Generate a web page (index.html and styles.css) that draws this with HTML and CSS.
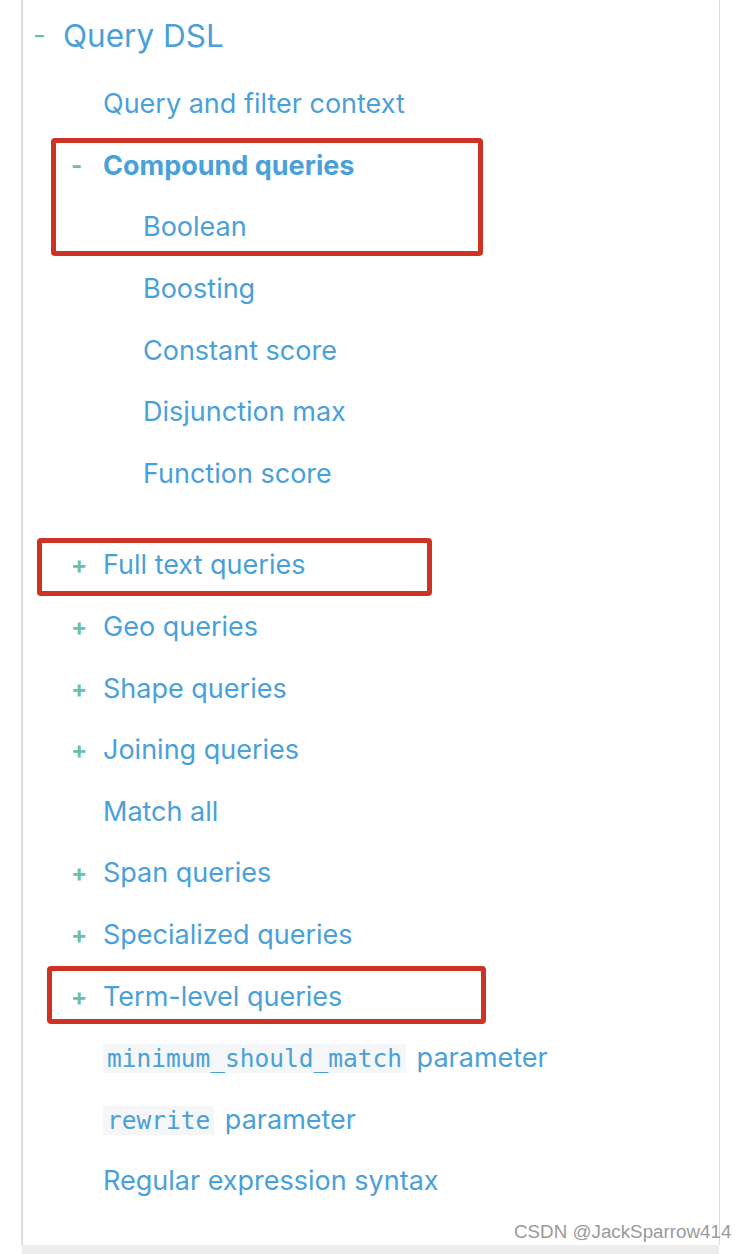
FILE: index.html
```html
<!DOCTYPE html>
<html lang="en">
<head>
<meta charset="utf-8">
<title>Query DSL</title>
<link rel="stylesheet" href="styles.css">
</head>
<body>
<div class="page">
  <nav class="sidebar">
    <div class="top-row">
      <span class="toggle minus">-</span>
      <a class="top-link">Query DSL</a>
    </div>
    <ul class="level2">
      <li class="row"><span class="toggle"></span><a>Query and filter context</a></li>
      <li class="row"><span class="toggle minus">-</span><a class="bold">Compound queries</a></li>
      <li>
        <ul class="level3">
          <li class="row"><a>Boolean</a></li>
          <li class="row"><a>Boosting</a></li>
          <li class="row"><a>Constant score</a></li>
          <li class="row"><a>Disjunction max</a></li>
          <li class="row"><a>Function score</a></li>
        </ul>
      </li>
      <li class="row"><span class="toggle plus">+</span><a>Full text queries</a></li>
      <li class="row"><span class="toggle plus">+</span><a>Geo queries</a></li>
      <li class="row"><span class="toggle plus">+</span><a>Shape queries</a></li>
      <li class="row"><span class="toggle plus">+</span><a>Joining queries</a></li>
      <li class="row"><span class="toggle"></span><a>Match all</a></li>
      <li class="row"><span class="toggle plus">+</span><a>Span queries</a></li>
      <li class="row"><span class="toggle plus">+</span><a>Specialized queries</a></li>
      <li class="row"><span class="toggle plus">+</span><a>Term-level queries</a></li>
      <li class="row"><span class="toggle"></span><a><code>minimum_should_match</code> parameter</a></li>
      <li class="row"><span class="toggle"></span><a><code>rewrite</code> parameter</a></li>
      <li class="row"><span class="toggle"></span><a>Regular expression syntax</a></li>
    </ul>
  </nav>
  <div class="footer-band"></div>
  <div class="mark box1"></div>
  <div class="mark box2"></div>
  <div class="mark box3"></div>
  <div class="watermark">CSDN @JackSparrow414</div>
</div>
</body>
</html>
```

FILE: styles.css
```css
html, body {
  margin: 0;
  padding: 0;
  background: #ffffff;
}

.page {
  position: relative;
  width: 746px;
  height: 1254px;
  overflow: hidden;
  font-family: Inter, "Noto Sans", sans-serif;
  color: #4aa0d8;
}

.sidebar {
  margin-left: 21px;
  width: 699px;
  height: 1245px;
  border-left: 2px solid #dcdcdc;
  border-right: 1px solid #dcdcdc;
  box-sizing: border-box;
}

.footer-band {
  margin-left: 22px;
  width: 697px;
  height: 9px;
  background: #ededed;
}

.top-row {
  display: flex;
  align-items: center;
  height: 40px;
  padding-top: 15px;
  padding-left: 8px;
}

.top-row .toggle {
  width: 32px;
  font-size: 28px;
  font-weight: 400;
}

.top-link {
  font-size: 31.5px;
}

ul {
  list-style: none;
  margin: 0;
  padding: 0;
}

.level2 {
  padding-left: 46px;
  padding-top: 18px;
}

.row {
  display: flex;
  align-items: center;
  height: 61.6px;
  font-size: 27px;
}

.level3 {
  padding-left: 74px;
  padding-bottom: 30px;
}

.toggle {
  display: inline-block;
  flex: none;
  width: 34px;
  color: #6dbfa8;
  font-size: 24px;
  font-weight: 700;
  padding-left: 2px;
  box-sizing: border-box;
}

.bold {
  font-weight: 700;
}

code {
  font-family: "DejaVu Sans Mono", monospace;
  font-size: 24.5px;
  background: #f4f6f8;
  padding: 0 4px;
  margin-right: 3px;
}

.mark {
  position: absolute;
  border: 5px solid #cc3322;
  border-radius: 4px;
  box-sizing: border-box;
}

.box1 {
  left: 51px;
  top: 138px;
  width: 432px;
  height: 118px;
}

.box2 {
  left: 37px;
  top: 538px;
  width: 395px;
  height: 58px;
}

.box3 {
  left: 47px;
  top: 966px;
  width: 439px;
  height: 58px;
}

.watermark {
  position: absolute;
  left: 514px;
  top: 1221px;
  font-family: "Liberation Sans", Arial, sans-serif;
  font-size: 18.8px;
  color: #9a9a9a;
  white-space: nowrap;
}
```
